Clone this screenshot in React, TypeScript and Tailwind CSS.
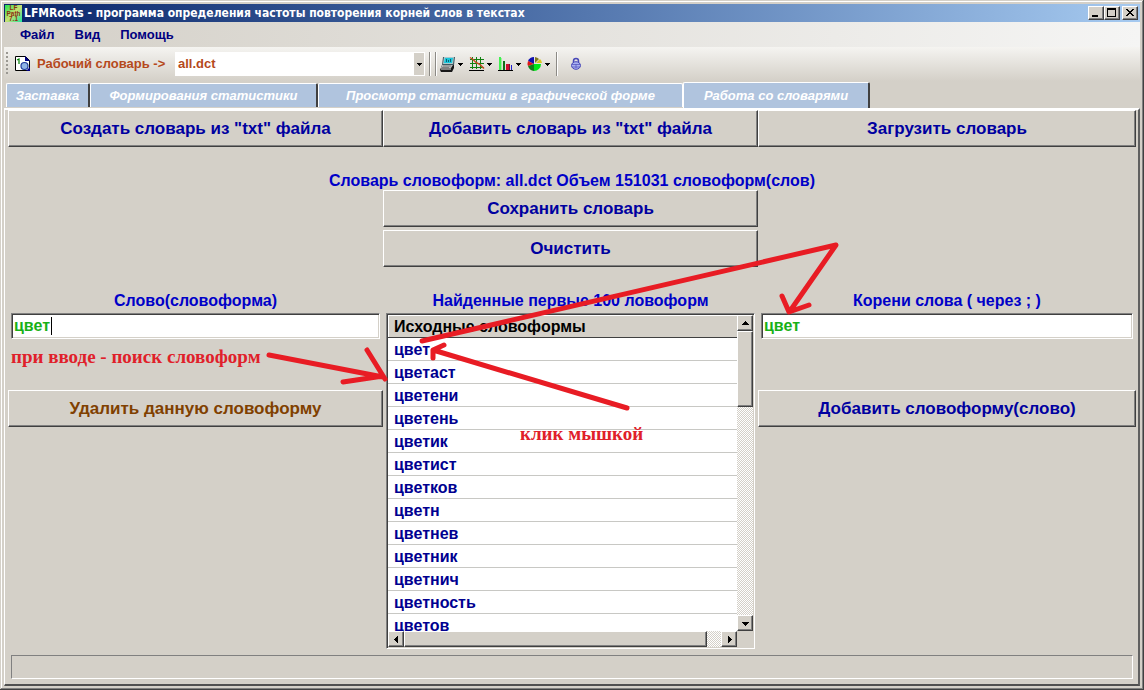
import React from "react";

const tabs = [
  { label: "Заставка", width: "w-[84px]", edge: "border-r-2 border-r-[#404040]" },
  { label: "Формирования статистики", width: "w-[228px]", edge: "border-r-2 border-r-[#404040]" },
  { label: "Просмотр статистики в графической форме", width: "w-[365px]", edge: "border-r border-r-white" },
  { label: "Работа со словарями", width: "w-[187px]", edge: "border-r-2 border-r-[#404040]" },
];

const words = [
  "цвет", "цветаст", "цветени", "цветень", "цветик", "цветист", "цветков",
  "цветн", "цветнев", "цветник", "цветнич", "цветность", "цветов",
];

const raised =
  "border border-t-white border-l-white border-b-[#404040] border-r-[#404040] shadow-[inset_-1px_-1px_0_#808080] bg-[#d4d0c8]";
const sunken =
  "border border-t-[#808080] border-l-[#808080] border-b-white border-r-white shadow-[inset_1px_1px_0_#404040,inset_-1px_-1px_0_#d4d0c8]";

function BigButton({ children, color = "text-[#0000a0]" }: { children: React.ReactNode; color?: string }) {
  return (
    <button type="button" className={`${raised} ${color} h-[37px] w-full text-[17px] font-bold leading-5`}>
      {children}
    </button>
  );
}

function Arrow({ d }: { d: string }) {
  return (
    <svg width="7" height="7" viewBox="0 0 7 7" shapeRendering="crispEdges" aria-hidden="true">
      <path d={d} fill="#000" />
    </svg>
  );
}
const UP = "M3 1h1v1h1v1h1v1h1v1H0V4h1V3h1V2h1z";
const DOWN = "M0 2h7v1H6v1H5v1H4v1H3V5H2V4H1V3H0z";
const LEFT = "M5 0v7H4V6H3V5H2V4H1V3h1V2h1V1h1V0z";
const RIGHT = "M2 0v7h1V6h1V5h1V4h1V3H5V2H4V1H3V0z";

function ScrollButton({ d, label }: { d: string; label: string }) {
  return (
    <button type="button" aria-label={label} className={`${raised} flex size-4 shrink-0 items-center justify-center`}>
      <Arrow d={d} />
    </button>
  );
}

function Divider() {
  return <span className="h-6 w-[2px] border-l border-[#8c8a85] bg-white" />;
}

function ToolButton({ label, children }: { label: string; children: React.ReactNode }) {
  return (
    <button type="button" aria-label={label} className="flex w-[29px] items-center gap-[2px]">
      <svg width="16" height="16" viewBox="0 0 16 16" className="shrink-0">
        {children}
      </svg>
      <svg width="5" height="3" viewBox="0 0 5 3" shapeRendering="crispEdges">
        <path d="M0 0h5v1H4v1H3v1H2V2H1V1H0z" />
      </svg>
    </button>
  );
}

function Toolbar() {
  return (
    <div className="flex h-[34px] items-center bg-linear-to-b from-[#f5f4f1] to-[#d4d0c8] pl-[2px]">
      <span className="h-6 w-[2px] bg-[repeating-linear-gradient(to_bottom,#9a9892_0_2px,transparent_2px_4px)]" />
      <svg width="16" height="16" viewBox="0 0 16 16" className="ml-[7px]" aria-hidden="true">
        <path d="M.5.5h10l4 4v10H.5z" fill="#fff" stroke="#000" />
        <path d="M10 0v5h5z" fill="#000080" />
        <path d="M2 4l2-1v5" fill="none" stroke="#008000" strokeWidth="1.2" />
        <path d="M11 15l4-4v4z" fill="#000080" />
        <circle cx="9.5" cy="10" r="3.5" fill="#8fb3e6" stroke="#203a9c" strokeWidth="1.2" />
      </svg>
      <label htmlFor="dictionary" className="ml-[6px] w-[138px] whitespace-nowrap text-[13px] font-bold text-[#b5491c]">
        Рабочий словарь -&gt;
      </label>
      <div className="flex h-6 w-[250px] border border-white bg-white">
        <select id="dictionary" defaultValue="all.dct" className="min-w-0 grow appearance-none bg-white pl-[2px] text-[13px] font-bold text-[#b5491c] outline-none">
          <option>all.dct</option>
        </select>
        <span className="pointer-events-none flex w-[10px] items-center justify-center bg-[#d4d0c8]">
          <svg width="5" height="3" viewBox="0 0 5 3" shapeRendering="crispEdges" aria-hidden="true">
            <path d="M0 0h5v1H4v1H3v1H2V2H1V1H0z" />
          </svg>
        </span>
      </div>
      <div className="ml-1 flex gap-1">
        <Divider />
        <Divider />
      </div>
      <div className="ml-[3px] flex">
        <ToolButton label="Компьютер">
          <path d="M3 1h12l-1 8H2z" fill="#405860" />
          <path d="M4 1h10l-1 7H3z" fill="#a8c8cc" />
          <path d="M5 2h8l-1 5H4z" fill="#18c8dc" />
          <path d="M6 3h1v3H6zM8 4h1v2H8zM10 3h1v3h-1z" fill="#086078" />
          <path d="M2 9h12v3l-2 4H1l-1-2z" fill="#181818" />
          <path d="M2 9h11l-2 3H1z" fill="#b8b8b8" />
          <path d="M1 12h10v2H1z" fill="#808080" />
          <path d="M3 10h8M2 11.500h7" stroke="#686868" strokeWidth=".7" />
        </ToolButton>
        <ToolButton label="Линейный график">
          <path d="M3 1h1v12H3zM7 1h1v12H7zM11 1h1v12h-1zM1 3h14v1H1zM1 7h14v1H1zM1 11h14v1H1z" fill="#108010" />
          <path d="M1 1.500l3 2 3 3 4 2 4 4" fill="none" stroke="#c84820" strokeWidth="1.500" />
          <path d="M0 14h15v1H0z" />
        </ToolButton>
        <ToolButton label="Гистограмма">
          <path d="M1 1h2v13H1z" fill="#40f050" />
          <path d="M3 2h1v12H3z" fill="#a0f0a0" />
          <path d="M5 5h2v9H5z" fill="#107018" />
          <path d="M8 8h3v6H8z" fill="#d01030" />
          <path d="M11 8h1v6h-1z" fill="#701838" />
          <path d="M13 9h1v5h-1z" fill="#2020d0" />
          <path d="M0 14h15v1H0z" />
        </ToolButton>
        <ToolButton label="Круговая диаграмма">
          <path d="M7 8V1a7 7 0 0 0-6 4z" fill="#1010b0" />
          <path d="M7 8L1 5a7 7 0 0 0 0 5z" fill="#e01818" />
          <path d="M7 8l-6 2a7 7 0 0 0 6 5z" fill="#108018" />
          <path d="M7 8v7a7 7 0 0 0 7-7z" fill="#00e818" />
          <path d="M8 7V1a7 7 0 0 1 4 2z" fill="#807820" />
          <path d="M9 7l4-4a7 7 0 0 1 2 4z" fill="#d8c820" />
        </ToolButton>
      </div>
      <Divider />
      <button type="button" aria-label="Защита" className="ml-3">
        <svg width="12" height="14" viewBox="0 0 12 14">
          <path d="M3.500 7V4a2.500 2.500 0 0 1 5 0v3" fill="none" stroke="#4848b8" strokeWidth="1.500" />
          <ellipse cx="6" cy="8.500" rx="4.500" ry="3.800" fill="#a8b0f0" stroke="#4848b8" />
          <path d="M2 7.500h8M2 10h8M6 7v4" stroke="#5858c0" strokeWidth=".8" />
        </svg>
      </button>
    </div>
  );
}

function TitleBar() {
  return (
    <header className="flex h-[18px] items-center bg-linear-to-r from-[#0a246a] to-[#a6caf0] pr-[2px]">
      <svg width="17" height="17" viewBox="0 0 16 16" className="ml-px" aria-hidden="true">
        <defs>
          <linearGradient id="app" x1="0" y1="0" x2="1" y2="1">
            <stop offset="0" stopColor="#20e050" />
            <stop offset=".5" stopColor="#c8e070" />
            <stop offset="1" stopColor="#20e8a0" />
          </linearGradient>
        </defs>
        <rect width="16" height="16" fill="url(#app)" />
        <g fontFamily="Liberation Sans" fontWeight="bold" fontSize="6" fill="#8a3010" textAnchor="middle">
          <text x="8" y="5">LF</text>
          <text x="8" y="10">Path</text>
          <text x="8" y="15">7.1</text>
        </g>
      </svg>
      <h1 className="ml-[2px] grow whitespace-nowrap font-['DejaVu_Sans_Condensed','DejaVu_Sans',sans-serif] text-[12px] leading-4 font-bold text-white">
        LFMRoots - программа определения частоты повторения корней слов в текстах
      </h1>
      <div className="flex">
        <button type="button" aria-label="Свернуть" className={`${raised} h-[14px] w-4`}>
          <svg width="14" height="12" viewBox="0 0 14 12" shapeRendering="crispEdges"><path d="M3 8h6v2H3z" /></svg>
        </button>
        <button type="button" aria-label="Развернуть" className={`${raised} h-[14px] w-4`}>
          <svg width="14" height="12" viewBox="0 0 14 12" shapeRendering="crispEdges"><path d="M2 1h9v9H2zM3 3v6h7V3z" fillRule="evenodd" /></svg>
        </button>
        <button type="button" aria-label="Закрыть" className={`${raised} ml-[2px] h-[14px] w-4`}>
          <svg width="14" height="12" viewBox="0 0 14 12" shapeRendering="crispEdges">
            <path d="M3 2h2v1h1v1h2V3h1V2h2v1h-1v1H9v1H8v1h1v1h1v1h1v1H9V8H8V7H6v1H5v1H3V8h1V7h1V6h1V5H5V4H4V3H3z" />
          </svg>
        </button>
      </div>
    </header>
  );
}

function WordList() {
  return (
    <div className={`${sunken} mx-[3px] flex h-[336px] flex-col bg-white p-px`}>
      <div className="flex min-h-0 grow">
        <div className="grow overflow-hidden">
          <table className="w-full border-separate border-spacing-0 text-left text-[16px] leading-5 font-bold">
            <thead>
              <tr>
                <th className="h-[23px] border-b border-[#404040] bg-[#d4d0c8] p-0 pt-[2px] pl-[6px] text-black shadow-[inset_1px_1px_0_#fff]">
                  Исходные словоформы
                </th>
              </tr>
            </thead>
            <tbody>
              {words.map((w) => (
                <tr key={w}>
                  <td className="h-[23px] border-b border-[#c8c8c4] p-0 pt-[2px] pl-[6px] text-[#000090]">{w}</td>
                </tr>
              ))}
            </tbody>
          </table>
        </div>
        <div className="flex w-4 shrink-0 flex-col bg-[repeating-conic-gradient(#d4d0c8_0_25%,#fff_0_50%)] bg-size-[2px_2px]">
          <ScrollButton d={UP} label="Вверх" />
          <div className={`${raised} h-[76px]`} />
          <div className="grow" />
          <ScrollButton d={DOWN} label="Вниз" />
        </div>
      </div>
      <div className="flex h-4 shrink-0 bg-[#d4d0c8]">
        <div className="flex grow bg-[repeating-conic-gradient(#d4d0c8_0_25%,#fff_0_50%)] bg-size-[2px_2px]">
          <ScrollButton d={LEFT} label="Влево" />
          <div className={`${raised} mr-[14px] grow`} />
          <ScrollButton d={RIGHT} label="Вправо" />
        </div>
        <div className="w-4" />
      </div>
    </div>
  );
}

const fieldLabel = "flex h-[26px] items-center justify-center pt-px text-[16px] font-bold text-[#0000c8]";
const field = `${sunken} h-[26px] w-full bg-white px-[2px] text-[16px] font-bold text-[#18b018] outline-none`;
const note = "font-['Liberation_Serif',serif] text-[19px] leading-5 font-bold whitespace-nowrap text-[#e0202a]";

export default function App() {
  return (
    <div className="relative flex min-h-screen flex-col overflow-hidden bg-[#d4d0c8] p-1 font-['Liberation_Sans',Arial,sans-serif] shadow-[inset_-1px_-1px_0_#404040,inset_1px_1px_0_#d4d0c8,inset_-2px_-2px_0_#808080,inset_2px_2px_0_#fff]">
      <TitleBar />
      <nav className="flex h-[25px] items-center gap-5 bg-linear-to-r from-[#d4d0c8] to-[#f5f5f4] pt-px pl-4 text-[13px] font-bold text-[#000080]">
        <a href="#file">Файл</a>
        <a href="#view">Вид</a>
        <a href="#help">Помощь</a>
      </nav>
      <Toolbar />
      <div role="tablist" className="flex h-[27px] items-end pl-[2px] text-[13px] font-bold italic text-white">
        {tabs.map((t, i) => (
          <button
            key={t.label}
            type="button"
            role="tab"
            aria-selected={i === 3}
            className={`${t.width} ${t.edge} ${i === 3 ? "h-[26px]" : "mb-px h-6"} whitespace-nowrap rounded-t-[2px] border-t border-l border-t-white border-l-white bg-[#b0c4de] italic`}
          >
            {t.label}
          </button>
        ))}
      </div>
      <main className="flex grow flex-col border-t-2 border-r-2 border-b-2 border-l border-t-white border-r-[#606060] border-b-[#505050] border-l-white pr-[2px] pl-[3px]">
        <div className="grid grid-cols-[375fr_375fr_378fr]">
          <BigButton>Создать словарь из "txt" файла</BigButton>
          <BigButton>Добавить словарь из "txt" файла</BigButton>
          <BigButton>Загрузить словарь</BigButton>
        </div>
        <p className="mt-6 text-center text-[16px] leading-[19px] font-bold text-[#0000c8]">
          Словарь словоформ: all.dct Объем 151031 словоформ(слов)
        </p>
        <div className="grid grid-cols-[375fr_375fr_378fr]">
          <div className="col-start-2 flex flex-col gap-[3px]">
            <BigButton>Сохранить словарь</BigButton>
            <BigButton>Очистить</BigButton>
          </div>
        </div>
        <div className="mt-5 grid grid-cols-[375fr_375fr_378fr]">
          <section>
            <label htmlFor="word" className={fieldLabel}>Слово(словоформа)</label>
            <div className="relative mx-[3px]">
              <input id="word" defaultValue="цвет" className={field} />
              <span className="absolute top-1 left-10 h-[18px] w-px bg-black" />
            </div>
            <p className={`${note} mx-[3px] h-[51px] pt-2`}>при вводе - поиск словоформ</p>
            <BigButton color="text-[#804000]">Удалить данную словоформу</BigButton>
          </section>
          <section>
            <h2 className={fieldLabel}>Найденные первые 100 ловоформ</h2>
            <WordList />
          </section>
          <section>
            <label htmlFor="roots" className={fieldLabel}>Корени слова ( через ; )</label>
            <div className="mx-[3px] mb-[51px] flex">
              <input id="roots" defaultValue="цвет" className={field} />
            </div>
            <BigButton>Добавить словоформу(слово)</BigButton>
          </section>
        </div>
        <footer className="mx-[3px] mt-auto mb-[5px] h-6 border border-t-[#808080] border-r-white border-b-white border-l-[#808080]" />
      </main>
      <svg width="1144" height="690" viewBox="0 0 1144 690" className="pointer-events-none absolute top-0 left-0" aria-hidden="true">
        <g fill="none" stroke="#e81c24" strokeWidth="5" strokeLinecap="round" strokeLinejoin="round">
          <path d="M422 341L836 245L790 311M782 296L789 312L809 305" />
          <path d="M627 408L433 350M444 345L433 350L433 358" />
          <path d="M269 355L383 377M367 350L385 379M343 382L383 376" />
        </g>
      </svg>
      <p className={`${note} pointer-events-none absolute top-[424px] left-[520px]`}>клик мышкой</p>
    </div>
  );
}
